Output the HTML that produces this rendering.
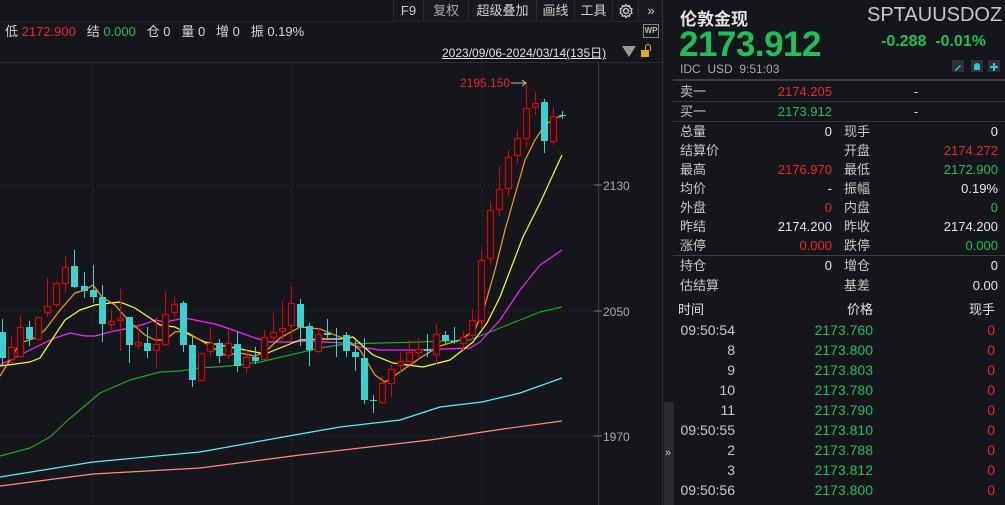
<!DOCTYPE html>
<html><head><meta charset="utf-8"><style>
*{margin:0;padding:0;box-sizing:border-box}
html,body{width:1005px;height:505px;overflow:hidden}
body{background:#14161b;position:relative;font-family:"Liberation Sans","Noto Sans CJK SC",sans-serif;color:#d8d8d8}
.a{position:absolute;white-space:nowrap}
.r{color:#f0242c}.g{color:#1ec05a}.w{color:#e8e8e8}
.tb{position:absolute;top:0;height:21px;border-left:1px solid #2a2d33;font-size:13px;color:#d0d0d0;line-height:21px;text-align:center;background:#17191e}
.row{position:absolute;left:680px;width:318px;height:19px;font-size:13px;line-height:19px}
.row span{position:absolute}
.l1{left:0;color:#c8c8c8}.v1{right:166px;text-align:right}.l2{left:164px;color:#c8c8c8}.v2{right:0;text-align:right}
.tr{position:absolute;left:680px;width:320px;height:20px;font-size:14px;line-height:20px}
.tr span{position:absolute}
</style></head><body>
<div class="tb" style="left:393px;width:30px">F9</div>
<div class="tb" style="left:423px;width:45px;color:#aaa">复权</div>
<div class="tb" style="left:468px;width:68px">超级叠加</div>
<div class="tb" style="left:536px;width:38px">画线</div>
<div class="tb" style="left:574px;width:38px">工具</div>
<div class="tb" style="left:612px;width:26px"><svg width="16" height="16" viewBox="0 0 16 16" style="margin-top:3px"><circle cx="8" cy="8" r="2.5" fill="none" stroke="#ccc" stroke-width="1.5"/><path d="M8 1.5l1.3 1.8 2.2-.5.4 2.2 2 1-.9 2 .9 2-2 1-.4 2.2-2.2-.5L8 14.5l-1.3-1.8-2.2.5-.4-2.2-2-1 .9-2-.9-2 2-1 .4-2.2 2.2.5z" fill="none" stroke="#ccc" stroke-width="1.3"/></svg></div>
<div class="tb" style="left:638px;width:25px">»</div>
<div class="a" style="left:0;top:21px;width:663px;height:1px;background:#22252b"></div>
<div class="a" style="left:5px;top:24px;font-size:13px;line-height:16px">低 <span class="r">2172.900</span>&nbsp;&nbsp; 结 <span class="g">0.000</span>&nbsp;&nbsp; 仓 0&nbsp;&nbsp; 量 0&nbsp;&nbsp; 增 0&nbsp;&nbsp; 振 0.19%</div>
<div class="a" style="left:643px;top:24px;width:16px;height:14px;border:1px solid #888;font-size:8px;color:#bbb;text-align:center;line-height:12px;font-weight:bold">WP</div>
<div class="a" style="left:442px;top:44px;font-size:12px;text-decoration:underline;color:#e0e0e0">2023/09/06-2024/03/14(135日)</div>
<div class="a" style="left:622px;top:46px;width:0;height:0;border-left:7px solid transparent;border-right:7px solid transparent;border-top:11px solid #999"></div>
<div class="a" style="left:641px;top:50px;width:8px;height:7px;background:#e8a822"></div>
<div class="a" style="left:645px;top:44px;width:6px;height:7px;border:1.5px solid #e8a822;border-bottom:none;border-radius:3px 3px 0 0"></div>
<div class="a" style="left:0;top:62px;width:663px;height:1px;background:#2a2d33"></div>
<svg class="a" style="left:0;top:0" width="663" height="505">
<g stroke="#3a3d44" stroke-dasharray="1,3" stroke-width="1">
<line x1="0" y1="185" x2="598" y2="185"/><line x1="0" y1="311" x2="598" y2="311"/><line x1="0" y1="436" x2="598" y2="436"/>
<line x1="93" y1="63" x2="93" y2="505"/><line x1="291" y1="63" x2="291" y2="505"/><line x1="482" y1="63" x2="482" y2="505"/>
</g>
<line x1="598.5" y1="63" x2="598.5" y2="505" stroke="#3a3d44"/>
<g stroke="#777"><line x1="594" y1="185" x2="602" y2="185"/><line x1="594" y1="311" x2="602" y2="311"/><line x1="594" y1="436" x2="602" y2="436"/></g>
<g font-size="12" fill="#a8a8a8" font-family="Liberation Sans"><text x="603" y="190">2130</text><text x="603" y="316">2050</text><text x="603" y="441">1970</text></g>
<line x1="662.5" y1="0" x2="662.5" y2="505" stroke="#2e3138"/>
<g fill="none" stroke-width="1.2" stroke-linejoin="round">
<polyline stroke="#ff8a80" points="0,486 93,474 200,468 300,455 430,440 503,429 562,421"/>
<polyline stroke="#5ff0f0" points="0,477 93,462 200,452 300,434 340,427 400,420 440,407 482,402 520,393 562,378"/>
<polyline stroke="#1aa81a" points="0,456 30,448 50,437 68,420 100,393 130,380 160,372 180,371 200,368 230,366 260,362 290,355 320,348 345,344 380,343 420,342 470,340 480,336 500,328 520,320 540,312 562,307"/>
<polyline stroke="#ff20ff" points="0,365 20,355 40,345 55,338 70,333 85,336 95,336 110,332 130,328 145,324 155,320 165,322 175,320 185,318 200,321 215,324 230,329 255,338 270,342 290,342 310,341 343,343 360,347 380,350 420,350 470,348 480,342 500,320 520,290 540,265 562,250"/>
<polyline stroke="#ffff20" points="0,366 15,364 30,362 40,358 55,335 65,320 80,310 95,305 110,303 120,302 135,308 150,318 160,325 175,327 190,335 205,342 220,345 240,349 255,352 265,354 280,348 300,340 320,339 340,339 353,337 373,355 393,363 423,367 450,360 473,342 487,323 500,297 513,263 523,237 540,203 562,155"/>
<polyline stroke="#ff9a10" points="0,376 10,360 20,343 35,338 45,330 60,310 75,293 85,290 93,285 102,297 115,305 130,322 145,335 155,340 165,340 175,332 185,331 200,340 215,349 225,355 240,353 255,356 265,352 280,338 300,327 320,329 340,337 346,339 360,350 375,375 385,382 400,372 420,358 440,346 460,340 475,330 485,305 495,270 505,230 515,195 525,160 535,140 545,125 555,118 562,116"/>
</g>
<g id="c"></g>
<text x="460" y="87" font-size="12" fill="#f0242c" font-family="Liberation Sans">2195.150</text>
<line x1="511" y1="83" x2="526" y2="83" stroke="#bbb"/><path d="M522 80l4 3-4 3" fill="none" stroke="#bbb"/>
</svg>
<div class="a" style="left:664px;top:402px;width:10px;height:103px;background:#2a2b30"></div>
<div class="a" style="left:665px;top:447px;font-size:11px;color:#ccc">»</div>
<div class="a" style="left:680px;top:5px;font-size:17px;font-weight:bold;color:#e4e4e4">伦敦金现</div>
<div class="a" style="left:867px;top:4px;font-size:20px;color:#c8c8c8">SPTAUUSDOZ</div>
<div class="a g" style="left:679px;top:25px;font-size:35px;font-weight:bold;letter-spacing:-0.5px">2173.912</div>
<div class="a g" style="left:881px;top:33px;font-size:16px;font-weight:bold">-0.288&nbsp;&nbsp;-0.01%</div>
<div class="a" style="left:680px;top:62px;font-size:12px;color:#a8a8a8">IDC&nbsp;&nbsp;USD&nbsp;&nbsp;9:51:03</div>
<div class="a" style="left:952px;top:60px;width:12px;height:12px;background:#2c3038"><svg width="12" height="12"><path d="M3 9l5-5 1 1-5 5H3z" fill="#38c0d8"/></svg></div>
<div class="a" style="left:971px;top:60px;width:12px;height:12px;background:#2c3038"><svg width="12" height="12"><path d="M3 9V5a3 3 0 016 0v4z" fill="#38c0d8"/></svg></div>
<div class="a" style="left:988px;top:60px;width:12px;height:12px;background:#2c3038"><svg width="12" height="12"><path d="M5 2h2v3h3v2H7v3H5V7H2V5h3z" fill="#38c0d8"/></svg></div>
<div class="a" style="left:673px;top:79px;width:332px;height:2px;background:#3a3d44"></div>
<div class="row" style="top:82px"><span class="l1">卖一</span><span class="v1 r">2174.205</span><span style="left:234px">-</span></div>
<div class="a" style="left:673px;top:101px;width:332px;height:1px;background:#33363d"></div>
<div class="row" style="top:102px"><span class="l1">买一</span><span class="v1 g">2173.912</span><span style="left:234px">-</span></div>
<div class="a" style="left:673px;top:121px;width:332px;height:1px;background:#33363d"></div>
<div class="row" style="top:122px"><span class="l1">总量</span><span class="v1 w">0</span><span class="l2">现手</span><span class="v2 w">0</span></div>
<div class="row" style="top:141px"><span class="l1">结算价</span><span class="l2">开盘</span><span class="v2 r">2174.272</span></div>
<div class="row" style="top:160px"><span class="l1">最高</span><span class="v1 r">2176.970</span><span class="l2">最低</span><span class="v2 g">2172.900</span></div>
<div class="row" style="top:179px"><span class="l1">均价</span><span class="v1 w">-</span><span class="l2">振幅</span><span class="v2 w">0.19%</span></div>
<div class="row" style="top:198px"><span class="l1">外盘</span><span class="v1 r">0</span><span class="l2">内盘</span><span class="v2 g">0</span></div>
<div class="row" style="top:217px"><span class="l1">昨结</span><span class="v1 w">2174.200</span><span class="l2">昨收</span><span class="v2 w">2174.200</span></div>
<div class="row" style="top:236px"><span class="l1">涨停</span><span class="v1 r">0.000</span><span class="l2">跌停</span><span class="v2 g">0.000</span></div>
<div class="a" style="left:673px;top:255px;width:332px;height:1px;background:#3a3d44"></div>
<div class="row" style="top:256px"><span class="l1">持仓</span><span class="v1 w">0</span><span class="l2">增仓</span><span class="v2 w">0</span></div>
<div class="row" style="top:276px"><span class="l1">估结算</span><span class="l2">基差</span><span class="v2 w">0.00</span></div>
<div class="tr" style="top:300px;font-size:13px"><span style="left:-2px;color:#e0e0e0">时间</span><span style="right:127px;color:#e0e0e0">价格</span><span style="right:5px;color:#e0e0e0">现手</span></div>
<div id="t"></div>
<script>
var c=[[2,332,358,319,365,0],[11,347,359,336,364,1],[20,327,356,315,358,1],[29,327,339,321,346,0],[38,317,339,317,339,1],[47,306,312,278,317,1],[56,283,304,281,307,1],[65,267,283,256,293,1],[74,266,287,250,288,0],[84,286,291,272,298,0],[93,290,297,265,303,0],[102,297,324,285,342,0],[111,321,324,309,332,1],[120,318,320,289,351,1],[129,317,345,317,363,0],[138,342,345,323,349,1],[147,343,351,327,358,0],[156,344,350,317,368,1],[165,314,344,292,346,1],[174,304,312,297,317,1],[183,303,345,301,352,0],[192,345,380,337,387,0],[201,353,380,353,381,1],[210,343,351,327,357,1],[219,343,356,339,363,0],[228,343,355,330,359,1],[237,344,366,332,372,0],[246,357,367,349,374,1],[255,357,361,347,364,0],[264,337,359,330,359,1],[273,332,337,313,342,1],[282,328,331,301,340,1],[291,303,325,286,340,1],[300,304,327,299,346,0],[309,326,350,323,366,0],[318,334,351,328,353,1],[327,333,335,319,340,0],[336,338,340,328,357,0],[346,335,351,332,357,0],[355,352,357,341,371,0],[364,358,400,338,404,0],[373,400,401,395,413,0],[382,383,402,376,404,1],[391,369,383,365,397,1],[400,361,365,352,372,1],[409,352,361,340,363,1],[418,349,352,338,357,1],[427,349,351,334,357,0],[436,334,354,324,364,1],[445,335,341,331,344,0],[454,341,342,327,344,0],[463,337,343,331,351,1],[472,320,335,309,340,1],[481,260,320,250,328,1],[490,210,258,201,265,1],[499,189,209,166,216,1],[508,157,188,150,196,1],[517,138,155,130,163,1],[526,108,138,83,148,1],[535,103,107,92,115,1],[544,102,141,99,153,0],[553,116,141,107,145,1],[562,115,116,111,119,0]];
var s='';c.forEach(function(k){var x=k[0],col=k[5]?'#e00000':'#3ccfcf';var h=Math.max(1,k[2]-k[1]);
if(k[5]){s+='<line x1="'+(x+.5)+'" y1="'+k[3]+'" x2="'+(x+.5)+'" y2="'+k[1]+'" stroke="'+col+'"/><line x1="'+(x+.5)+'" y1="'+k[2]+'" x2="'+(x+.5)+'" y2="'+k[4]+'" stroke="'+col+'"/><rect x="'+(x-2.5)+'" y="'+(k[1]+.5)+'" width="6" height="'+h+'" fill="#14161b" stroke="'+col+'" stroke-width="1.2"/>';}
else{s+='<line x1="'+(x+.5)+'" y1="'+k[3]+'" x2="'+(x+.5)+'" y2="'+k[4]+'" stroke="'+col+'"/><rect x="'+(x-3)+'" y="'+k[1]+'" width="7" height="'+h+'" fill="'+col+'"/>';}});
document.getElementById('c').innerHTML=s;
var t=[['09:50:54','2173.760'],['8','2173.800'],['9','2173.803'],['10','2173.780'],['11','2173.790'],['09:50:55','2173.810'],['2','2173.788'],['3','2173.812'],['09:50:56','2173.800'],['4','2173.800']];
var o='';t.forEach(function(r,i){o+='<div class="tr" style="top:'+(320+i*20)+'px"><span style="right:265px;color:#c8c8c8">'+r[0]+'</span><span class="g" style="right:127px">'+r[1]+'</span><span class="r" style="right:5px">0</span></div>';});
document.getElementById('t').innerHTML=o;
</script>
</body></html>
